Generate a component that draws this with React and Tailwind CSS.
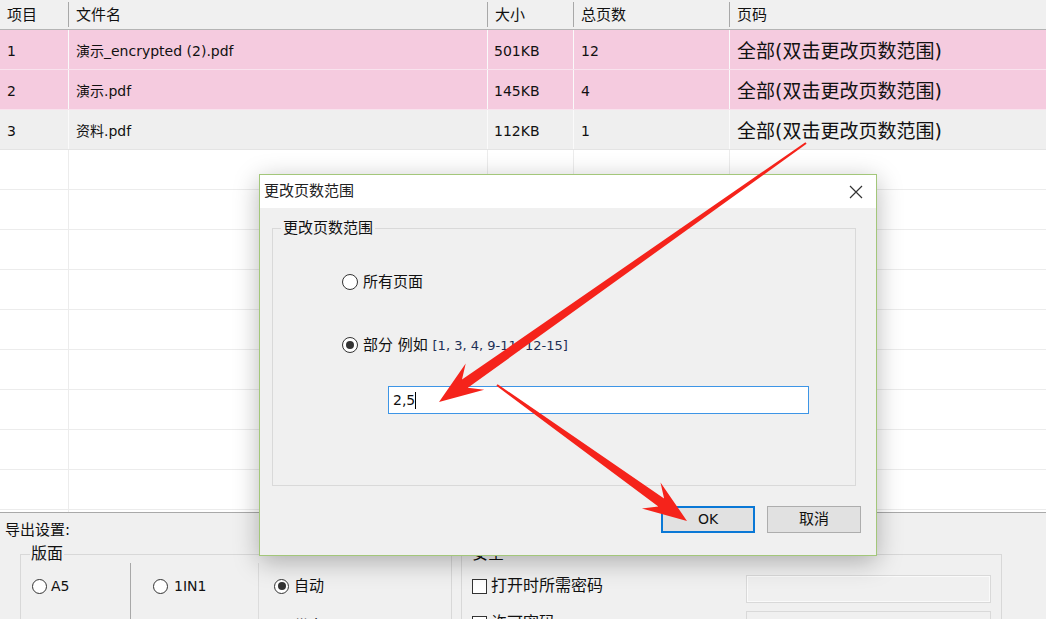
import React from 'react';

const FONT = "font-['DejaVu_Sans','Noto_Sans_CJK_SC',sans-serif]";

const rows = [
  { no: '1', name: '演示_encrypted (2).pdf', size: '501KB', pages: '12', pink: true },
  { no: '2', name: '演示.pdf', size: '145KB', pages: '4', pink: true },
  { no: '3', name: '资料.pdf', size: '112KB', pages: '1', pink: false },
];

const headers = ['项目', '文件名', '大小', '总页数', '页码'];

// 红色箭头：尾部细，头部三角
function arrowPoints(tx, ty, px, py, head, half, tail, neck) {
  const dx = px - tx, dy = py - ty;
  const len = Math.hypot(dx, dy);
  const ux = dx / len, uy = dy / len;
  const nx = -uy, ny = ux;
  const bx = px - ux * head, by = py - uy * head;
  const kx = px - ux * head * 0.72, ky = py - uy * head * 0.72;
  const pts = [
    [tx + nx * tail, ty + ny * tail],
    [kx + nx * neck, ky + ny * neck],
    [bx + nx * half, by + ny * half],
    [px, py],
    [bx - nx * half, by - ny * half],
    [kx - nx * neck, ky - ny * neck],
    [tx - nx * tail, ty - ny * tail],
  ];
  return pts.map(p => p.map(v => v.toFixed(1)).join(',')).join(' ');
}

function Radio({ checked, big }) {
  return (
    <span className={`${big ? 'w-[16px] h-[16px]' : 'w-[15px] h-[15px]'} rounded-full border border-[#333] bg-white flex items-center justify-center shrink-0`}>
      {checked && <span className="w-[8px] h-[8px] rounded-full bg-[#333]" />}
    </span>
  );
}

function Check() {
  return <span className="w-[15px] h-[15px] border border-[#333] bg-white shrink-0" />;
}

function App() {
  return (
    <div className={`relative w-[1046px] h-[619px] overflow-hidden bg-white text-[#111] ${FONT}`}>
      {/* 文件列表 */}
      <div className="h-[512px] overflow-hidden">
        <div className="grid grid-cols-[69px_419px_86px_156px_1fr] h-[30px] bg-[#f0f0f0] border-b border-[#b4b4b4]">
          {headers.map((h, i) => (
            <div key={h} className="py-[2px]">
              <div className={`h-full flex items-center pl-[7px] pt-[2px] text-[15px] ${i < 4 ? 'border-r border-[#a8a8a8]' : ''}`}>{h}</div>
            </div>
          ))}
        </div>

        {rows.map(r => (
          <div
            key={r.no}
            className={`grid grid-cols-[69px_419px_86px_156px_1fr] h-[40px] ${r.pink ? 'bg-[#f5cbdf] border-b border-[#f9e3ee]' : 'bg-[#efefef] border-b border-[#e4e4e4]'}`}
          >
            <div className="flex items-center px-[7px] pt-[4px] text-[14px] border-r border-[#fafafa]">{r.no}</div>
            <div className="flex items-center px-[7px] pt-[4px] text-[14px] border-r border-[#fafafa]">{r.name}</div>
            <div className="flex items-center px-[6px] pt-[4px] text-[14px] border-r border-[#fafafa]">{r.size}</div>
            <div className="flex items-center px-[7px] pt-[4px] text-[14px] border-r border-[#fafafa]">{r.pages}</div>
            <div className="flex items-center px-[7px] pt-[3px] text-[19px]">全部(双击更改页数范围)</div>
          </div>
        ))}

        {Array.from({ length: 10 }).map((_, i) => (
          <div key={i} className="grid grid-cols-[69px_419px_86px_156px_1fr] h-[40px] border-b border-[#ececec]">
            <div className="border-r border-[#ececec]" />
            <div className="border-r border-[#ececec]" />
            <div className="border-r border-[#ececec]" />
            <div className="border-r border-[#ececec]" />
            <div />
          </div>
        ))}
      </div>

      {/* 导出设置 */}
      <div className="h-[107px] bg-[#f0f0f0] border-t border-[#a9a9a9] overflow-hidden">
        <div className="pl-[5px] pt-[7px] text-[15px] leading-[20px]">导出设置:</div>
        <div className="flex mt-[5px]">
          <fieldset className="ml-[20px] w-[432px] h-[120px] border border-[#d8d8d8]">
            <legend className="ml-[9px] px-[1px] text-[16px] leading-[18px]">版面</legend>
            <div className="grid grid-cols-[109px_128px_1fr] h-full">
              <div className="pl-[11px] pt-[14px] flex flex-col gap-[22px] text-[14px]">
                <div className="flex items-center gap-[4px] h-[18px]"><Radio /><span>A5</span></div>
                <div className="flex items-center gap-[4px] h-[18px]"><Radio checked /><span>A4</span></div>
              </div>
              <div className="pl-[22px] pt-[14px] flex flex-col gap-[22px] text-[14px] border-l border-[#a8a8a8]">
                <div className="flex items-center gap-[6px] h-[18px]"><Radio /><span>1IN1</span></div>
                <div className="flex items-center gap-[6px] h-[18px]"><Radio /><span>2IN1</span></div>
              </div>
              <div className="pl-[15px] pt-[14px] flex flex-col gap-[22px] text-[15px] border-l border-[#dcdcdc]">
                <div className="flex items-center gap-[5px] h-[18px]"><Radio checked /><span>自动</span></div>
                <div className="flex items-center gap-[5px] h-[18px]"><Radio /><span>纵向</span></div>
              </div>
            </div>
          </fieldset>
          <fieldset className="ml-[9px] w-[541px] h-[120px] border border-[#d8d8d8]">
            <legend className="ml-[8px] px-[2px] text-[16px] leading-[18px]">安全</legend>
            <div className="pl-[10px] pt-[12px] pr-[10px] flex flex-col gap-[8px]">
              <div className="flex items-center h-[28px]">
                <div className="flex items-center gap-[4px] w-[274px] text-[16px] -mt-[6px]"><Check /><span>打开时所需密码</span></div>
                <div className="w-[245px] h-[28px] bg-[#f0f0f0] border border-[#d9d9d9] shadow-[inset_0_0_0_1px_#fafafa]" />
              </div>
              <div className="flex items-center h-[28px]">
                <div className="flex items-center gap-[4px] w-[274px] text-[16px] -mt-[4px]"><Check /><span>许可密码</span></div>
                <div className="w-[245px] h-[28px] bg-[#f0f0f0] border border-[#d9d9d9]" />
              </div>
            </div>
          </fieldset>
        </div>
      </div>

      {/* 更改页数范围 对话框 */}
      <div className="absolute left-[259px] top-[174px] w-[618px] h-[382px] border border-[#a3c77a] bg-[#f0f0f0] shadow-[0_6px_24px_rgba(0,0,0,0.28)] flex flex-col">
        <div className="h-[33px] bg-white flex items-center justify-between pl-[4px] pr-[13px]">
          <span className="text-[15px] text-[#222]">更改页数范围</span>
          <svg width="14" height="14" viewBox="0 0 14 14">
            <path d="M1 1 L13 13 M13 1 L1 13" stroke="#333" strokeWidth="1.2" fill="none" />
          </svg>
        </div>
        <div className="flex flex-col pt-[11px] pl-[12px] pr-[20px]">
          <fieldset className="h-[267px] border border-[#d9d9d9]">
            <legend className="ml-[8px] px-[2px] text-[15px] leading-[18px]">更改页数范围</legend>
            <div className="pl-[69px] pt-[36px] flex flex-col">
              <div className="flex items-center gap-[5px] h-[18px] text-[15px]"><Radio big /><span>所有页面</span></div>
              <div className="flex items-center gap-[5px] h-[18px] mt-[45px] text-[15px]">
                <Radio checked big />
                <span>部分 例如 <span className="text-[13px] text-[#1d2f55]">[1, 3, 4, 9-11, 12-15]</span></span>
              </div>
              <div className="ml-[46px] mt-[32px] w-[421px] h-[28px] bg-white border border-[#3d95e6] flex items-center pl-[4px] text-[14px]">
                <span>2,5</span>
                <span className="w-px h-[17px] bg-black" />
              </div>
            </div>
          </fieldset>
          <div className="flex justify-end gap-[12px] mt-[20px] -mr-[5px]">
            <div className="w-[94px] h-[27px] border-2 border-[#0a78d6] bg-[#e1e1e1] flex items-center justify-center text-[14px]">OK</div>
            <div className="w-[94px] h-[27px] border border-[#adadad] bg-[#e1e1e1] flex items-center justify-center text-[15px]">取消</div>
          </div>
        </div>
      </div>

      {/* 红色箭头 */}
      <svg className="absolute inset-0 pointer-events-none" width="1046" height="619" viewBox="0 0 1046 619">
        <polygon points={arrowPoints(806, 143, 439, 402, 44, 16, 1, 5)} fill="#f5231b" />
        <polygon points={arrowPoints(497, 385, 687, 521, 44, 16, 1, 5)} fill="#f5231b" />
      </svg>
    </div>
  );
}

export default App;
